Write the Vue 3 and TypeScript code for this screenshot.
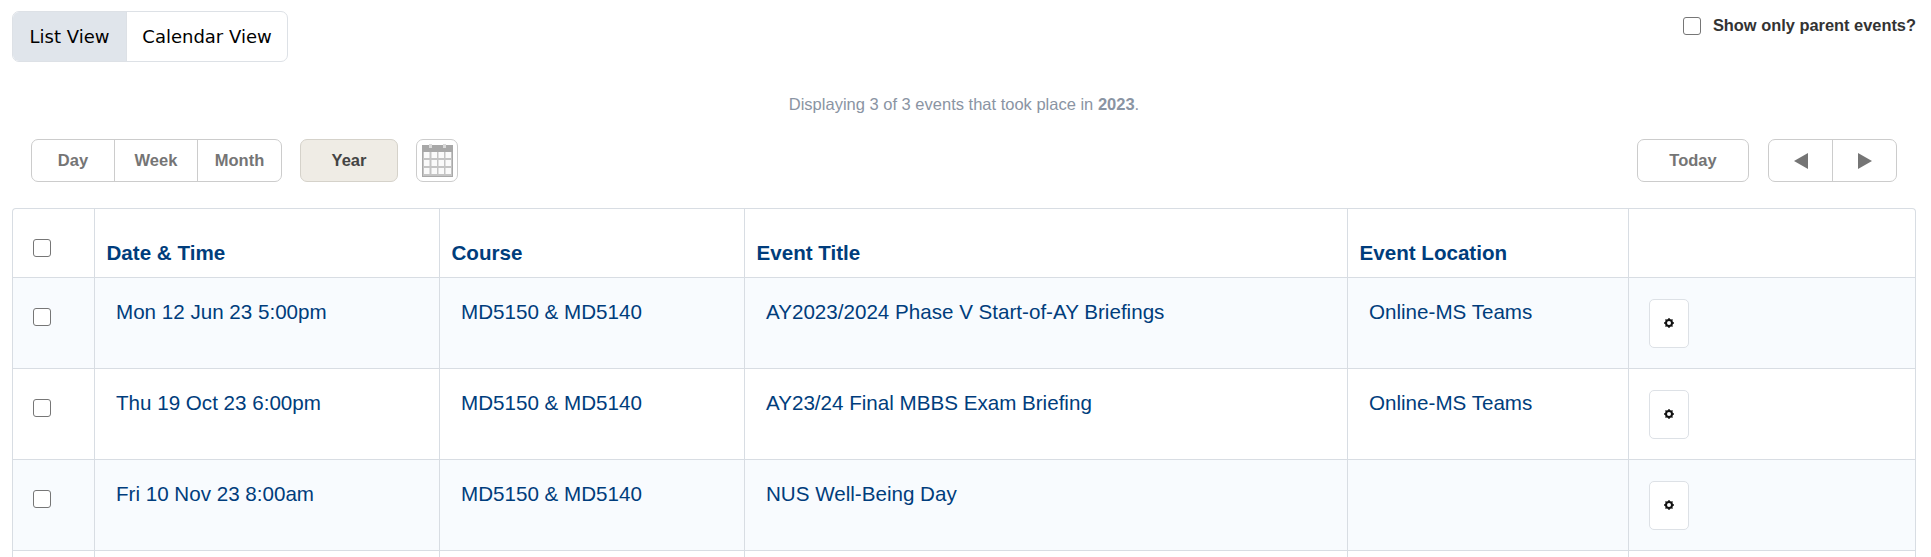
<script setup lang="ts">
interface EventRow { date: string; course: string; title: string; location: string; shaded: boolean }
const rows: EventRow[] = [
  { date: 'Mon 12 Jun 23 5:00pm', course: 'MD5150 & MD5140', title: 'AY2023/2024 Phase V Start-of-AY Briefings', location: 'Online-MS Teams', shaded: true },
  { date: 'Thu 19 Oct 23 6:00pm', course: 'MD5150 & MD5140', title: 'AY23/24 Final MBBS Exam Briefing', location: 'Online-MS Teams', shaded: false },
  { date: 'Fri 10 Nov 23 8:00am', course: 'MD5150 & MD5140', title: 'NUS Well-Being Day', location: '', shaded: true },
]
const cols = [81, 345, 305, 603, 281]
</script>

<template>
  <div class="page">
    <div class="top">
      <div class="toggle">
        <span class="tab active">List View</span>
        <span class="tab">Calendar View</span>
      </div>
      <label class="parent"><span class="check"></span>Show only parent events?</label>
    </div>
    <p class="summary">Displaying 3 of 3 events that took place in <b>2023</b>.</p>
    <div class="toolbar">
      <div class="group range">
        <span class="btn day">Day</span>
        <span class="btn week">Week</span>
        <span class="btn month">Month</span>
      </div>
      <span class="btn solo year">Year</span>
      <span class="btn solo cal">
        <svg width="31" height="33" viewBox="0 0 31 33">
          <rect x="0" y="1" width="31" height="32" fill="#a8a8a8" />
          <rect x="1" y="8" width="29" height="24" fill="#c4c4c4" />
          <rect x="7" y="0" width="3" height="4" fill="#dadada" />
          <rect x="21" y="0" width="3" height="4" fill="#dadada" />
          <g fill="#fafafa">
            <template v-for="y in [8, 16, 24]" :key="y">
              <rect v-for="x in [2, 9.5, 16.5, 23.5]" :key="x" :x="x" :y="y" width="5.5" height="6" />
            </template>
          </g>
        </svg>
      </span>
      <span class="spacer"></span>
      <span class="btn solo today">Today</span>
      <div class="group nav">
        <span class="btn arrow"><i class="tri left"></i></span>
        <span class="btn arrow"><i class="tri right"></i></span>
      </div>
    </div>
    <div class="table-wrap">
      <table>
        <colgroup><col v-for="w in cols" :key="w" :style="{ width: w + 'px' }" /><col /></colgroup>
        <thead>
          <tr>
            <th class="sel"><span class="check"></span></th>
            <th>Date &amp; Time</th>
            <th>Course</th>
            <th>Event Title</th>
            <th>Event Location</th>
            <th></th>
          </tr>
        </thead>
        <tbody>
          <tr v-for="r in rows" :key="r.date" :class="{ shaded: r.shaded }">
            <td class="sel"><span class="check"></span></td>
            <td>{{ r.date }}</td>
            <td>{{ r.course }}</td>
            <td>{{ r.title }}</td>
            <td>{{ r.location }}</td>
            <td class="act">
              <span class="gear">
                <svg width="10" height="10" viewBox="0 0 10 10">
                  <circle cx="5" cy="5" r="3" fill="none" stroke="#111" stroke-width="2" />
                  <path d="M5 0v2M5 8v2M0 5h2M8 5h2M1.5 1.5l1.4 1.4M7.1 7.1l1.4 1.4M1.5 8.5l1.4-1.4M7.1 2.9l1.4-1.4" stroke="#111" stroke-width="1.3" />
                </svg>
              </span>
            </td>
          </tr>
          <tr class="tail"><td></td><td></td><td></td><td></td><td></td><td></td></tr>
        </tbody>
      </table>
    </div>
  </div>
</template>

<style>
html, body { margin: 0; background: #fff; overflow: hidden; }
</style>

<style scoped>
.page {
  width: 1931px;
  height: 557px;
  overflow: hidden;
  box-sizing: border-box;
  padding: 11px 15px 0 12px;
  font-family: "Liberation Sans", Arial, sans-serif;
}
.top { display: flex; justify-content: space-between; align-items: flex-start; height: 51px; }
.toggle {
  display: flex;
  height: 51px;
  box-sizing: border-box;
  border: 1px solid #dde1e6;
  border-radius: 7px;
  overflow: hidden;
  font: 18px "DejaVu Sans", sans-serif;
  color: #000;
}
.tab { display: flex; align-items: center; justify-content: center; width: 160px; }
.tab.active { width: 113px; background: #e0e5eb; border-right: 1px solid #dde1e6; }
.parent {
  display: flex;
  align-items: center;
  gap: 12px;
  margin-top: 5px;
  font-size: 16.4px;
  font-weight: 700;
  color: #333;
}
.check {
  display: inline-block;
  width: 18px;
  height: 18px;
  box-sizing: border-box;
  border: 1px solid #767676;
  border-radius: 3px;
  background: #fff;
  vertical-align: top;
}
.summary {
  margin: 0;
  padding-top: 33px;
  height: 12px;
  line-height: 18px;
  text-align: center;
  font-size: 16.5px;
  color: #8a94a3;
}
.toolbar {
  display: flex;
  align-items: stretch;
  height: 43px;
  margin: 32px 0 0 19px;
  padding-right: 19px;
  font-size: 16.5px;
  font-weight: 700;
  color: #757575;
}
.group {
  display: flex;
  box-sizing: border-box;
  border: 1px solid #ccc;
  border-radius: 7px;
}
.btn { display: flex; align-items: center; justify-content: center; box-sizing: border-box; }
.group .btn + .btn { border-left: 1px solid #ccc; }
.range { width: 251px; }
.day { width: 82px; }
.week { width: 83px; }
.month { flex: 1; }
.solo { border: 1px solid #ccc; border-radius: 7px; }
.year { width: 98px; margin-left: 18px; background: #efece5; color: #444; border-color: #d5d2ca; }
.cal { width: 42px; margin-left: 18px; }
.spacer { flex: 1; }
.today { width: 112px; }
.nav { width: 129px; margin-left: 19px; }
.arrow { flex: 1; }
.tri { width: 0; height: 0; border-top: 8px solid transparent; border-bottom: 8px solid transparent; }
.tri.left { border-right: 14px solid #757575; }
.tri.right { border-left: 14px solid #757575; }
.table-wrap {
  margin-top: 26px;
  border: 1px solid #d8dde3;
  border-radius: 4px 4px 0 0;
  border-bottom: 0;
}
table { width: 100%; border-collapse: collapse; table-layout: fixed; font-size: 20.6px; color: #003d7c; }
th, td { border-left: 1px solid #d8dde3; border-bottom: 1px solid #d8dde3; box-sizing: border-box; vertical-align: top; }
th:first-child, td:first-child { border-left: 0; }
th {
  height: 68px;
  padding: 32px 0 0 12px;
  text-align: left;
  font-size: 20.6px;
  line-height: 24px;
  font-weight: 700;
}
td { height: 91px; padding: 19px 0 0 21.5px; line-height: 30px; }
th.sel { padding: 30px 0 0 20px; }
td.sel { padding: 30px 0 0 20px; }
.shaded td { background: #f8fbfe; }
td.act { padding: 21px 0 0 20px; }
.gear {
  display: flex;
  align-items: center;
  justify-content: center;
  width: 40px;
  height: 49px;
  box-sizing: border-box;
  border: 1px solid #dde1e6;
  border-radius: 5px;
  background: #fff;
}
.tail td { height: 20px; border-bottom: 0; }
</style>
